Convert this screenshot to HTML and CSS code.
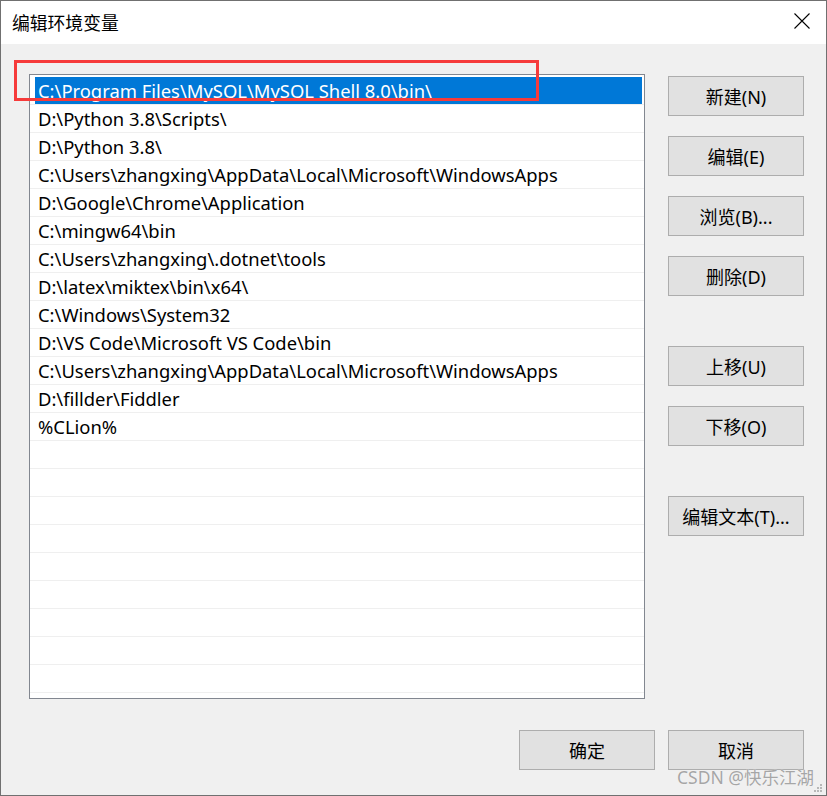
FILE: index.html
```html
<!DOCTYPE html>
<html lang="zh-CN">
<head>
<meta charset="utf-8">
<title>编辑环境变量</title>
<link rel="stylesheet" href="styles.css">
</head>
<body>
<div class="window">
  <div class="titlebar">
    <span class="title">编辑环境变量</span>
    <svg class="close" width="16" height="16" viewBox="0 0 16 16"><path d="M0.5 0.5 L15.5 15.5 M15.5 0.5 L0.5 15.5" stroke="#000" stroke-width="1.1" fill="none"/></svg>
  </div>
  <div class="content">
    <div class="main">
      <div class="list">
        <div class="row sel"><div class="cell">C:\Program Files\MySQL\MySQL Shell 8.0\bin\</div></div>
        <div class="row"><div class="cell">D:\Python 3.8\Scripts\</div></div>
        <div class="row"><div class="cell">D:\Python 3.8\</div></div>
        <div class="row"><div class="cell">C:\Users\zhangxing\AppData\Local\Microsoft\WindowsApps</div></div>
        <div class="row"><div class="cell">D:\Google\Chrome\Application</div></div>
        <div class="row"><div class="cell">C:\mingw64\bin</div></div>
        <div class="row"><div class="cell">C:\Users\zhangxing\.dotnet\tools</div></div>
        <div class="row"><div class="cell">D:\latex\miktex\bin\x64\</div></div>
        <div class="row"><div class="cell">C:\Windows\System32</div></div>
        <div class="row"><div class="cell">D:\VS Code\Microsoft VS Code\bin</div></div>
        <div class="row"><div class="cell">C:\Users\zhangxing\AppData\Local\Microsoft\WindowsApps</div></div>
        <div class="row"><div class="cell">D:\fillder\Fiddler</div></div>
        <div class="row"><div class="cell">%CLion%</div></div>
        <div class="row"><div class="cell"></div></div>
        <div class="row"><div class="cell"></div></div>
        <div class="row"><div class="cell"></div></div>
        <div class="row"><div class="cell"></div></div>
        <div class="row"><div class="cell"></div></div>
        <div class="row"><div class="cell"></div></div>
        <div class="row"><div class="cell"></div></div>
        <div class="row"><div class="cell"></div></div>
        <div class="row"><div class="cell"></div></div>
      </div>
      <div class="side">
        <div class="group">
          <button class="btn">新建(N)</button>
          <button class="btn">编辑(E)</button>
          <button class="btn">浏览(B)...</button>
          <button class="btn">删除(D)</button>
        </div>
        <div class="group">
          <button class="btn">上移(U)</button>
          <button class="btn">下移(O)</button>
        </div>
        <div class="group">
          <button class="btn">编辑文本(T)...</button>
        </div>
      </div>
    </div>
    <div class="footer">
      <button class="btn">确定</button>
      <button class="btn">取消</button>
    </div>
  </div>
  <div class="highlight"></div>
  <div class="watermark">CSDN @快乐江湖</div>
  <svg class="grip" width="10" height="10" viewBox="0 0 10 10">
    <rect x="7" y="1" width="2" height="2" fill="#b8b8b8"/>
    <rect x="4" y="4" width="2" height="2" fill="#b8b8b8"/>
    <rect x="7" y="4" width="2" height="2" fill="#b8b8b8"/>
    <rect x="1" y="7" width="2" height="2" fill="#b8b8b8"/>
    <rect x="4" y="7" width="2" height="2" fill="#b8b8b8"/>
    <rect x="7" y="7" width="2" height="2" fill="#b8b8b8"/>
  </svg>
</div>
</body>
</html>
```
FILE: styles.css
```css
* { box-sizing: border-box; }
html, body { margin: 0; padding: 0; }
body {
  font-family: "Noto Sans", "Noto Sans CJK SC", sans-serif;
  font-size: 18px;
  color: #000;
  background: #f0f0f0;
}
.window {
  position: relative;
  width: 827px;
  height: 796px;
  border: 1px solid #707070;
  background: #f0f0f0;
  display: flex;
  flex-direction: column;
}
.titlebar {
  height: 43px;
  background: #fff;
  display: flex;
  align-items: center;
  justify-content: space-between;
  padding: 0 16px 1px 11px;
}
.title {
  font-family: "Noto Sans CJK SC", sans-serif;
  font-size: 17.8px;
}
.close { display: block; margin-top: -2px; }
.content {
  flex: 1;
  display: flex;
  flex-direction: column;
  padding: 30px 21px 0 28px;
}
.main {
  display: flex;
  gap: 23px;
}
.list {
  width: 616px;
  height: 625px;
  background: #fff;
  border: 1px solid #828790;
  overflow: hidden;
}
.row {
  height: 28px;
  padding: 0 2px 0 1px;
  border-bottom: 1px solid #efefef;
}
.row:first-child { height: 30px; padding-top: 2px; }
.cell {
  height: 27px;
  margin-left: 4px;
  padding-left: 3px;
  line-height: 28px;
  white-space: nowrap;
  font-size: 18.4px;
}
.sel .cell { background: #0078d7; color: #fff; line-height: 27px; }
.side {
  display: flex;
  flex-direction: column;
  gap: 50px;
  padding-top: 2px;
}
.group {
  display: flex;
  flex-direction: column;
  gap: 20px;
}
.btn {
  width: 136px;
  height: 40px;
  background: #e1e1e1;
  border: 1px solid #adadad;
  font-family: "Noto Sans", "Noto Sans CJK SC", sans-serif;
  font-size: 18px;
  color: #000;
  padding: 0;
  margin: 0;
}
.footer {
  display: flex;
  justify-content: flex-end;
  gap: 13px;
  margin-top: 31px;
  padding-right: 1px;
}
.highlight {
  position: absolute;
  left: 13px;
  top: 59px;
  width: 525px;
  height: 41px;
  border: 3px solid #f63b3b;
}
.watermark {
  position: absolute;
  left: 676px;
  top: 763px;
  font-family: "Noto Sans", "Noto Sans CJK SC", sans-serif;
  font-size: 17.5px;
  color: #a6a6a6;
  text-shadow: 0 0 1px #fff;
}
.grip {
  position: absolute;
  right: 3px;
  bottom: 2px;
}
```
